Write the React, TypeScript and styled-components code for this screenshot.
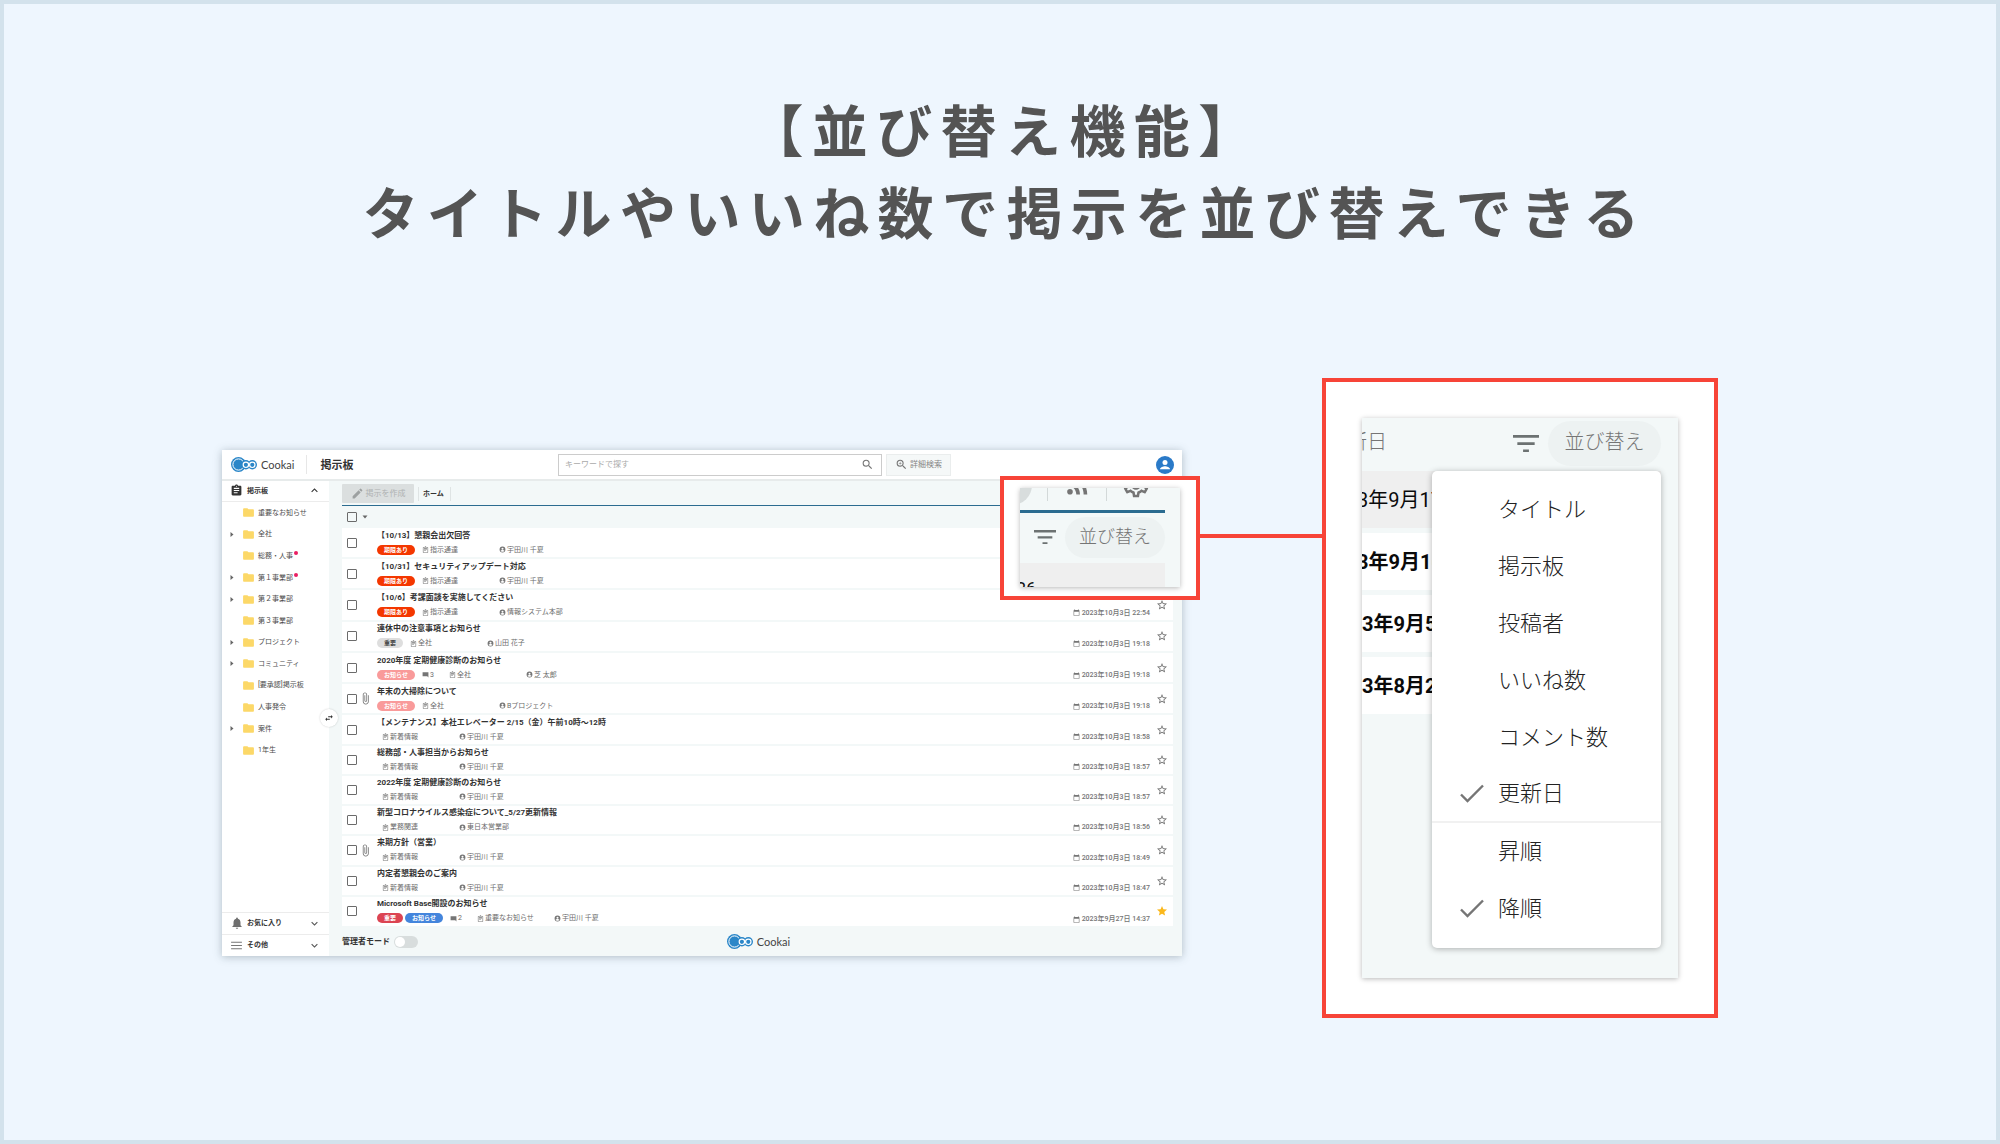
import React from "react";
import styled, { createGlobalStyle } from "styled-components";

const GlobalStyle = createGlobalStyle`
  *, *::before, *::after { box-sizing: border-box; }
  body {
    margin: 0;
    font-family: Roboto, "Noto Sans CJK JP", sans-serif;
    color: #333;
  }
  h1, h2, ul, p { margin: 0; padding: 0; }
  ul { list-style: none; }
  button, input { font-family: inherit; }
  button {
    padding: 0;
    border: 0;
    background: none;
    color: inherit;
    cursor: pointer;
  }
  svg { display: block; flex: none; }
`;

const RED = "#f74438";
const PALE = "#f3f8f8";
const NAVY = "#2b6c90";

/* ---------- page ---------- */

const Page = styled.main`
  min-height: 100vh;
  padding-top: 83px;
  border: 4px solid #d3e2ec;
  background: #eef6fe;
`;

const Heading = styled.h1`
  padding-left: 10px;
  font-family: "Noto Sans CJK JP", sans-serif;
  font-size: 56px;
  line-height: 82px;
  font-weight: 700;
  letter-spacing: 0.15em;
  text-align: center;
  color: #545454;

  span { display: block; }
`;

const Figure = styled.section`
  display: grid;
  grid-template-columns: minmax(0, 1fr) 140px 396px;
  align-items: start;
  margin-top: 127px;
  padding: 0 278px 40px 218px;
`;

const Connector = styled.div`
  height: 4px;
  margin-top: 156px;
  background: ${RED};
`;

/* ---------- application window ---------- */

const AppWindow = styled.div`
  position: relative;
  display: flex;
  flex-direction: column;
  min-height: 506px;
  margin-top: 72px;
  background: #fff;
  box-shadow: 0 1px 8px rgba(60, 80, 90, 0.35);
`;

const TopBar = styled.header`
  display: grid;
  grid-template-columns: 332px minmax(0, 324px) auto 1fr;
  align-items: center;
  column-gap: 4px;
  height: 31px;
  padding-right: 8px;
  border-bottom: 2px solid #e7ebeb;
`;

const Brand = styled.div`
  display: flex;
  align-items: center;
  padding-left: 9px;
`;

const LogoBox = styled.span`
  display: inline-flex;
  align-items: center;
  gap: 4px;
  font-family: Lato, sans-serif;
  font-size: 11px;
  line-height: 14px;
  color: #444;
`;

const BoardTitle = styled.h2`
  margin-left: 12px;
  padding: 2px 0 0 13px;
  border-left: 1px solid #e7e7e7;
  font-size: 11px;
  line-height: 17px;
  font-weight: 700;
`;

const SearchBox = styled.label`
  display: flex;
  align-items: center;
  height: 22px;
  padding: 0 7px 0 6px;
  border: 1px solid #ccc;
  background: #fff;

  input {
    flex: 1;
    min-width: 0;
    padding: 0;
    border: 0;
    outline: 0;
    font-size: 8px;
    line-height: 12px;
    background: none;
  }
  input::placeholder { color: #aaa; opacity: 1; }
`;

const DetailSearch = styled.button`
  display: flex;
  align-items: center;
  justify-content: center;
  gap: 2px;
  width: 65px;
  height: 22px;
  border: 1px solid #eaeded;
  background: #f5f8f8;
  font-size: 8px;
  line-height: 12px;
  color: #858585;
`;

const Account = styled.button`
  justify-self: end;
  width: 18px;
  height: 18px;
`;

const Body = styled.div`
  flex: 1;
  display: grid;
  grid-template-columns: 107px minmax(0, 1fr);
`;

/* ---------- sidebar ---------- */

const Sidebar = styled.nav`
  position: relative;
  display: flex;
  flex-direction: column;
  background: #fff;
`;

const SideSection = styled.button<{ $line: "top" | "bottom" }>`
  display: grid;
  grid-template-columns: 11px 1fr 12px;
  align-items: center;
  column-gap: 5px;
  width: 100%;
  height: ${(p) => (p.$line === "top" ? 22 : 21)}px;
  padding: 0 9px 1px 9px;
  border-${(p) => p.$line}: 1px solid #ececec;
  font-size: 7px;
  line-height: 12px;
  font-weight: 700;
  text-align: left;

  svg:first-child { justify-self: center; }
`;

const FolderList = styled.ul`
  display: grid;
  grid-auto-rows: 1fr;
  height: 259px;
  margin-bottom: auto;
`;

const Folder = styled.button`
  display: grid;
  grid-template-columns: 4px 11px auto auto;
  align-items: center;
  column-gap: 4px;
  height: 100%;
  padding-left: 8px;
  font-size: 7px;
  line-height: 12px;
  color: #4c4c4c;

  svg:nth-of-type(2) { margin-left: 4px; }
  span { padding-left: 5px; }
  i {
    align-self: start;
    width: 4px;
    height: 4px;
    margin: 6px 0 0 -3px;
    border-radius: 50%;
    background: #ea1e63;
  }
`;

const CollapseButton = styled.button`
  position: absolute;
  top: 228px;
  right: -9px;
  display: grid;
  place-items: center;
  width: 18px;
  height: 18px;
  border-radius: 50%;
  background: #fff;
  box-shadow: 0 0 2px rgba(0, 0, 0, 0.2);
`;

/* ---------- board ---------- */

const Board = styled.div`
  display: flex;
  flex-direction: column;
  padding: 0 9px 0 13px;
  background: ${PALE};
`;

const Toolbar = styled.div`
  display: flex;
  align-items: center;
  height: 25px;
  padding-top: 1px;
  border-bottom: 1px solid ${NAVY};
`;

const CreateButton = styled.button`
  display: flex;
  align-items: center;
  justify-content: center;
  gap: 2px;
  width: 72px;
  height: 19px;
  border-radius: 1px;
  background: #dbdfdf;
  font-size: 8px;
  line-height: 12px;
  color: #afb2b2;
`;

const Tab = styled.a`
  margin-left: 4px;
  padding: 0 6px 0 4px;
  border: solid #dfe4e4;
  border-width: 0 1px;
  font-size: 7px;
  line-height: 14px;
  font-weight: 700;
  color: #333;
  text-decoration: none;
`;

const SelectRow = styled.div`
  display: flex;
  align-items: center;
  gap: 5px;
  height: 22px;
  padding-left: 5px;
`;

const Check = styled.input`
  appearance: none;
  width: 10px;
  height: 10px;
  margin: 0;
  border: 1px solid #6b6b6b;
  border-radius: 1px;
`;

const Posts = styled.ul`
  flex: 1;
  display: flex;
  flex-direction: column;
  gap: 2px;
`;

const PostRow = styled.li<{ $tagged: boolean }>`
  flex: 1 1 auto;
  display: grid;
  grid-template-columns: 10px 8px minmax(0, 1fr) auto 11px;
  align-items: center;
  min-height: ${(p) => (p.$tagged ? 29 : 28)}px;
  padding: 0 6px 0 5px;
  background: #fff;

  & > svg { margin-left: 2px; }
`;

const PostMain = styled.div`
  padding-left: 12px;
`;

const PostTitle = styled.a`
  display: block;
  font-size: 8px;
  line-height: 14px;
  font-weight: 700;
  color: #333;
  text-decoration: none;
  white-space: nowrap;
`;

const Meta = styled.div`
  display: flex;
  align-items: center;
  height: 14px;
  font-size: 7px;
  line-height: 12px;
  color: #6c6c6c;
  white-space: nowrap;
`;

const TAG_COLORS = {
  due: ["#f43700", "#fff"],
  gray: ["#dedede", "#444"],
  pink: ["#f99a9a", "#fff"],
  red: ["#dc4452", "#fff"],
  blue: ["#4485dc", "#fff"],
} as const;

const Tag = styled.span<{ $tone: keyof typeof TAG_COLORS }>`
  margin-right: 2px;
  padding: 0 7px;
  border-radius: 5px;
  background: ${(p) => TAG_COLORS[p.$tone][0]};
  color: ${(p) => TAG_COLORS[p.$tone][1]};
  font-size: 6px;
  line-height: 10px;
  font-weight: 700;
`;

const MetaItem = styled.span<{ $width?: number }>`
  display: flex;
  align-items: center;
  gap: 1px;
  min-width: ${(p) => (p.$width ? `${p.$width}px` : "auto")};
  margin-left: 5px;
`;

const PostDate = styled.span`
  align-self: end;
  display: flex;
  align-items: center;
  gap: 2px;
  height: 14px;
  margin-right: 6px;
  font-size: 7px;
  line-height: 12px;
  font-weight: 500;
  color: #757575;
`;

const Footer = styled.footer`
  display: grid;
  grid-template-columns: 1fr auto 1fr;
  align-items: center;
  height: 30px;
  padding: 1px 0 0 2px;
`;

const AdminMode = styled.label`
  display: flex;
  align-items: center;
  gap: 4px;
  margin-left: -2px;
  font-size: 8px;
  line-height: 12px;
  font-weight: 700;

  input {
    appearance: none;
    display: flex;
    width: 24px;
    height: 12px;
    margin: 0;
    padding: 1px;
    border-radius: 6px;
    background: #d8dddd;
  }
  input::before {
    content: "";
    width: 10px;
    height: 10px;
    border-radius: 50%;
    background: #fff;
  }
`;

/* ---------- magnified toolbar ---------- */

const Callout = styled.div`
  position: absolute;
  top: 26px;
  right: -18px;
  width: 200px;
  height: 124px;
  padding: 8px 16px;
  border: 4px solid ${RED};
  background: #fff;
`;

const CalloutView = styled.div`
  display: flex;
  flex-direction: column;
  height: 99px;
  padding-right: 15px;
  overflow: hidden;
  background: ${PALE};
`;

const Shade = styled.div`
  box-shadow: 0 1px 5px rgba(0, 0, 0, 0.28);
`;

const CalloutTools = styled.div`
  display: grid;
  grid-template: 22px / 12px 15px 59px 1fr;
  align-items: end;
  height: 25px;
  flex: none;
  border-bottom: 3px solid ${NAVY};
`;

const RoundTool = styled.span`
  justify-self: end;
  width: 40px;
  height: 40px;
  margin-bottom: 5px;
  border-radius: 50%;
  background: #d8dddd;
`;

const ToolSlot = styled.span`
  display: flex;
  align-items: flex-end;
  justify-content: center;
  height: 13px;
  margin-bottom: 9px;
  border-left: 1px solid #d3d9d9;
`;

const SortBar = styled.div<{ $height: number }>`
  display: flex;
  align-items: center;
  justify-content: flex-end;
  gap: 9px;
  flex: none;
  height: ${(p) => p.$height}px;
  padding-bottom: 2px;
`;

const SortButton = styled.button<{ $large?: boolean }>`
  width: ${(p) => (p.$large ? 113 : 100)}px;
  height: ${(p) => (p.$large ? 45 : 41)}px;
  padding-bottom: ${(p) => (p.$large ? 6 : 4)}px;
  border-radius: 23px;
  background: #edf2f2;
  font-family: "Noto Sans CJK JP", sans-serif;
  font-size: ${(p) => (p.$large ? 20 : 18)}px;
  font-weight: 300;
  color: #757575;
`;

const CutRow = styled.div`
  flex: 1;
  padding-top: 16px;
  background: #efefef;
  font-size: 18px;
  line-height: 20px;
  color: #111;
  text-indent: -4px;
`;

/* ---------- sort menu panel ---------- */

const Panel = styled.div`
  padding: 36px;
  border: 4px solid ${RED};
  background: #fff;
`;

const PanelView = styled.div`
  position: relative;
  height: 560px;
  padding-right: 17px;
  overflow: hidden;
  background: ${PALE};
`;

const ColumnName = styled.span`
  margin-right: auto;
  margin-left: -15px;
  padding-bottom: 6px;
  font-family: "Noto Sans CJK JP", sans-serif;
  font-size: 20px;
  font-weight: 300;
  color: #757575;
`;

const DateRows = styled.ul`
  display: grid;
  gap: 5px;
`;

const DateRow = styled.li<{ $read?: boolean; $shift?: boolean }>`
  height: 57px;
  background: ${(p) => (p.$read ? "#efefef" : "#fff")};
  font-size: 20px;
  line-height: 59px;
  font-weight: ${(p) => (p.$read ? 400 : 700)};
  text-indent: ${(p) => (p.$shift ? -5 : 0)}px;
  color: #0a0a0a;
`;

const Menu = styled.div`
  position: absolute;
  top: 53px;
  right: 17px;
  width: 229px;
  padding: 10px 0 11px;
  border-radius: 5px;
  background: #fff;
  box-shadow: 0 1px 6px rgba(0, 0, 0, 0.3);
`;

const MenuItem = styled.button<{ $last?: boolean }>`
  display: grid;
  grid-template-columns: 24px 1fr;
  align-items: center;
  column-gap: 14px;
  width: 100%;
  height: 57px;
  padding-left: 28px;
  border-bottom: ${(p) => (p.$last ? "2px solid #f1f1f1" : "0")};
  font-family: "Noto Sans CJK JP", sans-serif;
  font-size: 22px;
  line-height: 32px;
  font-weight: 300;
  text-align: left;
  color: #222;

  span {
    grid-column: 2;
    padding-bottom: 6px;
  }
`;

/* ---------- icons ---------- */

const BLUE = "#2a86c8";

function Logo() {
  return (
    <LogoBox>
      <svg width="26" height="15" viewBox="0 0 26 15">
        <circle cx="7.5" cy="7.5" r="7.5" fill={BLUE} />
        <circle cx="7.5" cy="7.5" r="5.6" fill={BLUE} stroke="#fff" strokeWidth="1" />
        <circle cx="21.3" cy="7.8" r="4.7" fill={BLUE} />
        <circle cx="14.9" cy="7.8" r="4.7" fill={BLUE} />
        <circle cx="14.9" cy="7.8" r="2.7" fill={BLUE} stroke="#fff" strokeWidth="1.2" />
        <circle cx="21.3" cy="7.8" r="2.7" fill={BLUE} stroke="#fff" strokeWidth="1.2" />
      </svg>
      Cookai
    </LogoBox>
  );
}

type GlyphProps = { d: string; size: number; color?: string; box?: string };

function Glyph({ d, size, color = "#757575", box = "0 0 24 24" }: GlyphProps) {
  return (
    <svg width={size} height={size} viewBox={box} fill={color} aria-hidden="true">
      <path d={d} />
    </svg>
  );
}

const PATHS = {
  search:
    "M15.5 14h-.79l-.28-.27A6.47 6.47 0 0 0 16 9.5 6.5 6.5 0 1 0 9.5 16c1.61 0 3.09-.59 4.23-1.57l.27.28v.79l5 4.99L20.49 19l-4.99-5zm-6 0C7.01 14 5 11.99 5 9.5S7.01 5 9.5 5 14 7.01 14 9.5 11.99 14 9.5 14z",
  zoomIn:
    "M15.5 14h-.79l-.28-.27A6.47 6.47 0 0 0 16 9.5 6.5 6.5 0 1 0 9.5 16c1.61 0 3.09-.59 4.23-1.57l.27.28v.79l5 4.99L20.49 19l-4.99-5zm-6 0C7.01 14 5 11.99 5 9.5S7.01 5 9.5 5 14 7.01 14 9.5 11.99 14 9.5 14zM12 10h-2v2H9v-2H7V9h2V7h1v2h2v1z",
  assignment:
    "M19 3h-4.18C14.4 1.84 13.3 1 12 1s-2.4.84-2.82 2H5c-1.1 0-2 .9-2 2v14c0 1.1.9 2 2 2h14c1.1 0 2-.9 2-2V5c0-1.1-.9-2-2-2zm-7 0c.55 0 1 .45 1 1s-.45 1-1 1-1-.45-1-1 .45-1 1-1zm2 14H7v-2h7v2zm3-4H7v-2h10v2zm0-4H7V7h10v2z",
  clipboard:
    "M7 15h7v2H7zm0-4h10v2H7zm0-4h10v2H7zm12-4h-4.180C14.400 1.840 13.300 1 12 1s-2.400.84-2.820 2H5c-1.100 0-2 .9-2 2v16c0 1.100.9 2 2 2h14c1.100 0 2-.9 2-2V5c0-1.100-.9-2-2-2zm0 18H5V5h14v16z",
  folder: "M10 4H4c-1.1 0-2 .9-2 2v12c0 1.1.9 2 2 2h16c1.1 0 2-.9 2-2V8c0-1.1-.9-2-2-2h-8l-2-2z",
  bell: "M12 22c1.1 0 2-.9 2-2h-4c0 1.1.89 2 2 2zm6-6v-5c0-3.07-1.64-5.64-4.5-6.32V4c0-.83-.67-1.5-1.5-1.5s-1.5.67-1.5 1.5v.68C7.63 5.36 6 7.92 6 11v5l-2 2v1h16v-1l-2-2z",
  menu: "M2 19h20v-2H2v2zm0-6h20v-2H2v2zm0-8v2h20V5H2z",
  pencil:
    "M3 17.25V21h3.75L17.81 9.94l-3.75-3.75L3 17.25zM20.71 7.04a1 1 0 0 0 0-1.41l-2.34-2.34a1 1 0 0 0-1.41 0l-1.83 1.83 3.75 3.75 1.83-1.83z",
  up: "M12 8l-6 6 1.41 1.41L12 10.83l4.59 4.58L18 14z",
  down: "M16.59 8.59L12 13.17 7.41 8.59 6 10l6 6 6-6z",
  swap: "M6.99 11L3 15l3.99 4v-3H14v-2H6.99v-3zM21 9l-3.99-4v3H10v2h7.01v3L21 9z",
  person:
    "M12 2a10 10 0 1 0 0 20 10 10 0 0 0 0-20zm0 4a3.500 3.500 0 1 1 0 7 3.500 3.500 0 0 1 0-7zm0 13.500c-3 0-5.500-1.500-6.500-3.500 1-1.500 4-2.500 6.500-2.500s5.500 1 6.500 2.500c-1 2-3.500 3.500-6.500 3.500z",
  calendar:
    "M20 3h-1V1h-2v2H7V1H5v2H4c-1.100 0-2 .9-2 2v16c0 1.100.9 2 2 2h16c1.100 0 2-.9 2-2V5c0-1.100-.9-2-2-2zm0 18H4V9h16v12z",
  comment: "M2 4h20v18l-4-4H2z",
  clip: "M16.500 6v11.500c0 2.210-1.790 4-4 4s-4-1.790-4-4V5a2.500 2.500 0 0 1 5 0v10.500c0 .55-.45 1-1 1s-1-.45-1-1V6H10v9.500a2.500 2.500 0 0 0 5 0V5c0-2.210-1.790-4-4-4S7 2.790 7 5v12.500c0 3.040 2.460 5.500 5.500 5.500s5.500-2.460 5.500-5.500V6h-1.500z",
  star: "M12 17.27L18.18 21l-1.64-7.03L22 9.24l-7.19-.61L12 2 9.19 8.63 2 9.24l5.46 4.73L5.820 21z",
  starLine:
    "M22 9.24l-7.19-.62L12 2 9.19 8.63 2 9.24l5.46 4.73L5.820 21 12 17.27 18.180 21l-1.630-7.030L22 9.240zM12 15.400l-3.760 2.270 1-4.280-3.320-2.880 4.380-.38L12 6.100l1.710 4.040 4.380.38-3.320 2.880 1 4.280L12 15.400z",
  gear: "M19.430 12.980c.04-.32.07-.64.07-.98s-.03-.66-.07-.98l2.110-1.650c.19-.15.24-.42.12-.64l-2-3.460c-.12-.22-.39-.3-.61-.22l-2.490 1c-.52-.4-1.080-.73-1.690-.98l-.38-2.650A.488.488 0 0 0 14 2h-4c-.25 0-.46.18-.49.42l-.38 2.650c-.61.25-1.170.59-1.690.98l-2.490-1c-.23-.09-.49 0-.61.22l-2 3.460c-.13.22-.07.49.12.64l2.110 1.650c-.04.32-.07.65-.07.98s.03.66.07.98l-2.110 1.650c-.19.15-.24.42-.12.64l2 3.460c.12.22.39.3.61.22l2.490-1c.52.4 1.080.73 1.690.98l.38 2.650c.03.24.24.42.49.42h4c.25 0 .46-.18.49-.42l.38-2.650c.61-.25 1.170-.59 1.690-.98l2.490 1c.23.09.49 0 .61-.22l2-3.460c.12-.22.07-.49-.12-.64l-2.110-1.650zm-1.980-1.710c.04.31.05.52.05.73s-.02.43-.05.73l-.14 1.130.89.7 1.080.84-.7 1.210-1.270-.51-1.040-.42-.9.68c-.43.32-.84.56-1.250.73l-1.060.43-.16 1.130-.2 1.350h-1.400l-.19-1.350-.16-1.130-1.060-.43c-.43-.18-.83-.41-1.230-.71l-.91-.7-1.060.43-1.270.51-.7-1.210 1.080-.84.89-.7-.14-1.130c-.03-.31-.05-.54-.05-.74s.02-.43.05-.73l.14-1.130-.89-.7-1.080-.84.7-1.210 1.270.51 1.040.42.9-.68c.43-.32.84-.56 1.250-.73l1.060-.43.16-1.130.2-1.350h1.390l.19 1.350.16 1.130 1.060.43c.43.18.83.41 1.230.71l.91.7 1.060-.43 1.270-.51.7 1.210-1.070.85-.89.7.14 1.130zM12 8c-2.210 0-4 1.790-4 4s1.790 4 4 4 4-1.790 4-4-1.790-4-4-4z",
  rss: "M6.180 15.640a2.180 2.180 0 1 1 0 4.360 2.180 2.180 0 0 1 0-4.360zM4 4.440v2.830c7.030 0 12.730 5.700 12.730 12.730h2.830C19.560 11.410 12.590 4.440 4 4.440zm0 5.660v2.830c3.900 0 7.070 3.170 7.070 7.070h2.830c0-5.470-4.430-9.900-9.900-9.900z",
};

function FilterIcon({ width }: { width: number }) {
  return (
    <svg width={width} height={(width * 2) / 3} viewBox="0 0 24 16" fill="#6c7272" aria-hidden="true">
      <path d="M0 0h24v2.600H0zM4 6.700h16v2.600H4zM9.300 13.400h5.400V16H9.300z" />
    </svg>
  );
}

function Caret({ down, hidden }: { down?: boolean; hidden?: boolean }) {
  return (
    <svg
      width={down ? 6 : 4}
      height={down ? 4 : 5}
      viewBox={down ? "0 0 6 4" : "0 0 4 5"}
      fill={hidden ? "none" : "#666"}
      aria-hidden="true"
    >
      <path d={down ? "M.5.500h5L3 3.500z" : "M.5 0L3.500 2.500.5 5z"} />
    </svg>
  );
}

function Tick() {
  return (
    <svg width="24" height="19" viewBox="0 0 24 19" fill="none" stroke="#757575" strokeWidth="2.400" aria-hidden="true">
      <path d="M1 10.500l6.500 6.500L23 1.500" />
    </svg>
  );
}

/* ---------- data ---------- */

type FolderData = { name: string; open?: boolean; unread?: boolean };

const FOLDERS: FolderData[] = [
  { name: "重要なお知らせ" },
  { name: "全社", open: true },
  { name: "総務・人事", unread: true },
  { name: "第１事業部", open: true, unread: true },
  { name: "第２事業部", open: true },
  { name: "第３事業部" },
  { name: "プロジェクト", open: true },
  { name: "コミュニティ", open: true },
  { name: "[要承認]掲示板" },
  { name: "人事発令" },
  { name: "案件", open: true },
  { name: "1年生" },
];

type TagData = [string, keyof typeof TAG_COLORS];
type Post = {
  title: string;
  tags?: TagData[];
  comments?: number;
  board: string;
  author: string;
  date?: string;
  clip?: boolean;
  starred?: boolean;
};

const DUE: TagData = ["期限あり", "due"];
const NEWS: TagData = ["お知らせ", "pink"];

const POSTS: Post[] = [
  { title: "【10/13】懇親会出欠回答", tags: [DUE], board: "指示通達", author: "宇田川 千夏" },
  { title: "【10/31】セキュリティアップデート対応", tags: [DUE], board: "指示通達", author: "宇田川 千夏" },
  { title: "【10/6】考課面談を実施してください", tags: [DUE], board: "指示通達", author: "情報システム本部", date: "2023年10月3日 22:54" },
  { title: "連休中の注意事項とお知らせ", tags: [["重要", "gray"]], board: "全社", author: "山田 花子", date: "2023年10月3日 19:18" },
  { title: "2020年度 定期健康診断のお知らせ", tags: [NEWS], comments: 3, board: "全社", author: "芝 太郎", date: "2023年10月3日 19:18" },
  { title: "年末の大掃除について", tags: [NEWS], board: "全社", author: "Bプロジェクト", date: "2023年10月3日 19:18", clip: true },
  { title: "【メンテナンス】本社エレベーター 2/15（金）午前10時〜12時", board: "新着情報", author: "宇田川 千夏", date: "2023年10月3日 18:58" },
  { title: "総務部・人事担当からお知らせ", board: "新着情報", author: "宇田川 千夏", date: "2023年10月3日 18:57" },
  { title: "2022年度 定期健康診断のお知らせ", board: "新着情報", author: "宇田川 千夏", date: "2023年10月3日 18:57" },
  { title: "新型コロナウイルス感染症について_5/27更新情報", board: "業務関連", author: "東日本営業部", date: "2023年10月3日 18:56" },
  { title: "来期方針（営業）", board: "新着情報", author: "宇田川 千夏", date: "2023年10月3日 18:49", clip: true },
  { title: "内定者懇親会のご案内", board: "新着情報", author: "宇田川 千夏", date: "2023年10月3日 18:47" },
  {
    title: "Microsoft Base開設のお知らせ",
    tags: [["重要", "red"], ["お知らせ", "blue"]],
    comments: 2,
    board: "重要なお知らせ",
    author: "宇田川 千夏",
    date: "2023年9月27日 14:37",
    starred: true,
  },
];

const SORT_KEYS = ["タイトル", "掲示板", "投稿者", "いいね数", "コメント数", "更新日"];
const SORT_ORDERS = ["昇順", "降順"];

/* ---------- components ---------- */

function PostItem({ post }: { post: Post }) {
  return (
    <PostRow $tagged={!!post.tags}>
      <Check type="checkbox" aria-label={post.title} />
      {post.clip ? <Glyph d={PATHS.clip} size={13} box="0 0 24 24" /> : <span />}
      <PostMain>
        <PostTitle href="#">{post.title}</PostTitle>
        <Meta>
          {post.tags?.map(([name, tone]) => (
            <Tag key={name} $tone={tone}>{name}</Tag>
          ))}
          {post.comments && (
            <MetaItem $width={22}>
              <Glyph d={PATHS.comment} size={7} />
              {post.comments}
            </MetaItem>
          )}
          <MetaItem $width={72}>
            <Glyph d={PATHS.clipboard} size={7} />
            {post.board}
          </MetaItem>
          <MetaItem>
            <Glyph d={PATHS.person} size={7} />
            {post.author}
          </MetaItem>
        </Meta>
      </PostMain>
      {post.date ? (
        <PostDate>
          <Glyph d={PATHS.calendar} size={7} />
          {post.date}
        </PostDate>
      ) : (
        <span />
      )}
      <button aria-label="お気に入り">
        <Glyph d={post.starred ? PATHS.star : PATHS.starLine} size={12} color={post.starred ? "#fbb81c" : "#707070"} />
      </button>
    </PostRow>
  );
}

function SideNav() {
  return (
    <Sidebar>
      <SideSection $line="bottom">
        <Glyph d={PATHS.assignment} size={13} color="#333" />
        掲示板
        <Glyph d={PATHS.up} size={13} color="#333" />
      </SideSection>
      <FolderList>
        {FOLDERS.map((f) => (
          <li key={f.name}>
            <Folder>
              <Caret hidden={!f.open} />
              <Glyph d={PATHS.folder} size={13} color="#fcd868" />
              <span>{f.name}</span>
              {f.unread && <i />}
            </Folder>
          </li>
        ))}
      </FolderList>
      <SideSection $line="top">
        <Glyph d={PATHS.bell} size={14} color="#6f6f6f" />
        お気に入り
        <Glyph d={PATHS.down} size={13} color="#555" />
      </SideSection>
      <SideSection $line="top">
        <Glyph d={PATHS.menu} size={13} color="#777" />
        その他
        <Glyph d={PATHS.down} size={13} color="#555" />
      </SideSection>
      <CollapseButton aria-label="メニューを閉じる">
        <Glyph d={PATHS.swap} size={10} color="#333" />
      </CollapseButton>
    </Sidebar>
  );
}

function ToolbarCallout() {
  return (
    <Callout>
      <Shade>
        <CalloutView>
          <CalloutTools>
            <RoundTool />
            <span />
            <ToolSlot><Glyph d={PATHS.rss} size={31} box="0 1 24 24" /></ToolSlot>
            <ToolSlot><Glyph d={PATHS.gear} size={30} box="0 1 24 24" /></ToolSlot>
          </CalloutTools>
          <SortBar $height={50}>
            <FilterIcon width={22} />
            <SortButton>並び替え</SortButton>
          </SortBar>
          <CutRow>26</CutRow>
        </CalloutView>
      </Shade>
    </Callout>
  );
}

function SortPanel() {
  return (
    <Panel>
      <Shade>
        <PanelView>
          <SortBar $height={53}>
            <ColumnName>新日</ColumnName>
            <FilterIcon width={26} />
            <SortButton $large>並び替え</SortButton>
          </SortBar>
          <DateRows>
            <DateRow $read $shift>3年9月17</DateRow>
            <DateRow $shift>3年9月16</DateRow>
            <DateRow>3年9月5</DateRow>
            <DateRow>3年8月2</DateRow>
          </DateRows>
          <Menu role="menu">
            {SORT_KEYS.map((name) => {
              const on = name === "更新日";
              return (
                <MenuItem key={name} role="menuitemradio" aria-checked={on} $last={on}>
                  {on && <Tick />}
                  <span>{name}</span>
                </MenuItem>
              );
            })}
            {SORT_ORDERS.map((name) => {
              const on = name === "降順";
              return (
                <MenuItem key={name} role="menuitemradio" aria-checked={on}>
                  {on && <Tick />}
                  <span>{name}</span>
                </MenuItem>
              );
            })}
          </Menu>
        </PanelView>
      </Shade>
    </Panel>
  );
}

export default function App() {
  return (
    <Page lang="ja">
      <GlobalStyle />
      <Heading>
        <span>【並び替え機能】</span>
        <span>タイトルやいいね数で掲示を並び替えできる</span>
      </Heading>
      <Figure>
        <AppWindow>
          <TopBar>
            <Brand>
              <Logo />
              <BoardTitle>掲示板</BoardTitle>
            </Brand>
            <SearchBox>
              <input type="search" placeholder="キーワードで探す" aria-label="キーワードで探す" />
              <Glyph d={PATHS.search} size={13} />
            </SearchBox>
            <DetailSearch>
              <Glyph d={PATHS.zoomIn} size={13} />
              詳細検索
            </DetailSearch>
            <Account aria-label="アカウント">
              <svg width="18" height="18" viewBox="0 0 18 18">
                <circle cx="9" cy="9" r="9" fill="#2a7ac8" />
                <circle cx="9" cy="6.500" r="2.500" fill="#fff" />
                <path d="M4 13.200c0-1.900 3.300-2.900 5-2.900s5 1 5 2.900z" fill="#fff" />
              </svg>
            </Account>
          </TopBar>
          <Body>
            <SideNav />
            <Board>
              <Toolbar>
                <CreateButton>
                  <Glyph d={PATHS.pencil} size={13} color="#9da1a1" />
                  掲示を作成
                </CreateButton>
                <Tab href="#">ホーム</Tab>
              </Toolbar>
              <SelectRow>
                <Check type="checkbox" aria-label="すべて選択" />
                <Caret down />
              </SelectRow>
              <Posts>
                {POSTS.map((post) => (
                  <PostItem key={post.title} post={post} />
                ))}
              </Posts>
              <Footer>
                <AdminMode>
                  管理者モード
                  <input type="checkbox" role="switch" />
                </AdminMode>
                <Logo />
              </Footer>
            </Board>
          </Body>
          <ToolbarCallout />
        </AppWindow>
        <Connector />
        <SortPanel />
      </Figure>
    </Page>
  );
}
